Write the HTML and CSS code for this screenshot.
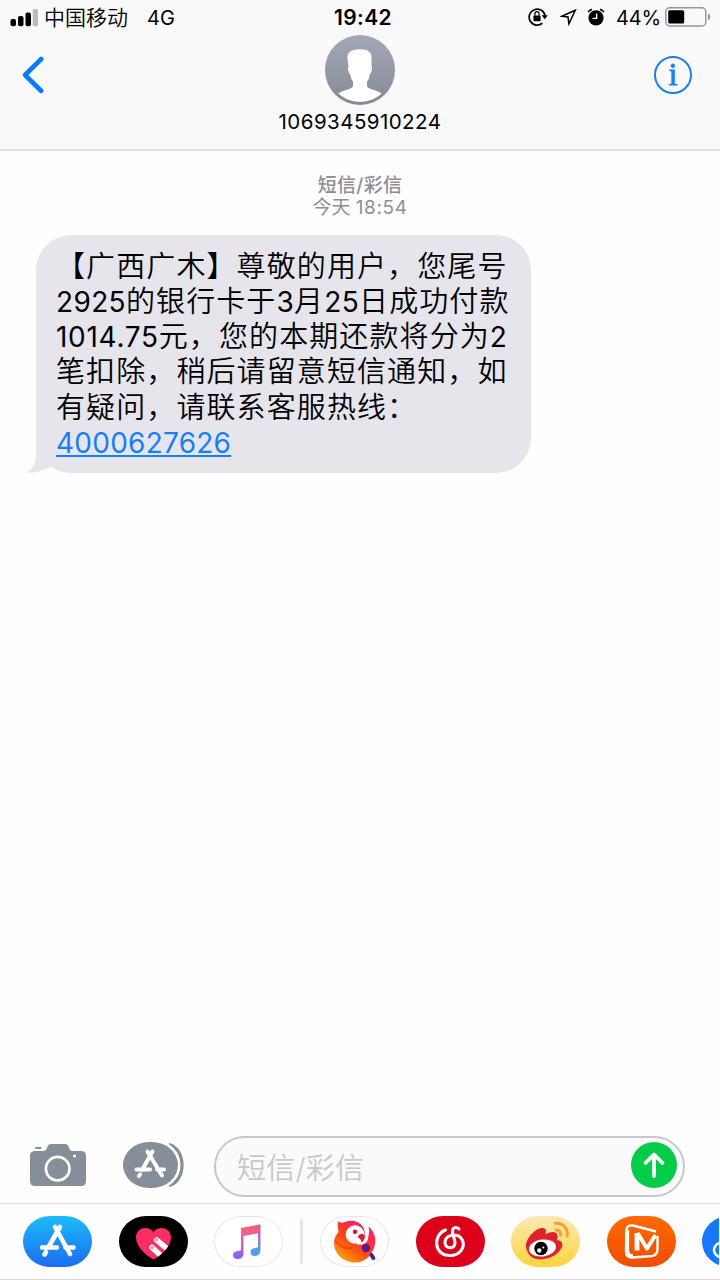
FILE: index.html
```
<!DOCTYPE html>
<html lang="zh-CN">
<head>
    <meta charset="utf-8">
    <title>短信</title>
    <link rel="stylesheet" href="styles.css">
</head>
<body>
    <div class="header">
        <div class="status-bar">
            <div class="status-left">
                <svg class="signal" width="28" height="18" viewBox="0 0 28 18">
                    <rect x="0.5" y="10" width="5.5" height="7.3" rx="2"/>
                    <rect x="8" y="7" width="5.5" height="10.3" rx="2"/>
                    <rect x="15.5" y="3.5" width="5.5" height="13.8" rx="2"/>
                    <rect x="22.8" y="0" width="5.2" height="17.3" rx="1.5" fill="#bcbcbc"/>
                </svg>
                <span class="carrier">中国移动</span>
                <span class="network">4G</span>
            </div>
            <div class="time">19:42</div>
            <div class="status-right">
                <svg width="20" height="20" viewBox="0 0 20 20">
                    <path d="M14.4 16.2A8 8 0 1 1 17 8.500" fill="none" stroke="#000" stroke-width="1.7"/>
                    <path d="M13.6 8.2h6.2l-3.1 4z"/>
                    <rect x="5.4" y="8.6" width="7.2" height="5.6" rx=".8"/>
                    <path d="M6.9 8.8V7a2.100 2.300 0 0 1 4.200 0v1.8" fill="none" stroke="#000" stroke-width="1.2"/>
                </svg>
                <svg class="location" width="17" height="17" viewBox="0 0 17 17">
                    <path d="M1.8 7.300L15.300 1.2L8.900 14.800L8 8z" fill="none" stroke="#000" stroke-width="1.5"/>
                </svg>
                <svg class="alarm" width="18" height="18" viewBox="0 0 18 18">
                    <circle cx="9" cy="9.8" r="7.6"/>
                    <path d="M1.2 4.2Q2.3 1.8 5 1.3M16.800 4.2Q15.700 1.8 13 1.3" fill="none" stroke="#000" stroke-width="1.8"/>
                    <path d="M9.6 5.4v5H5.6" fill="none" stroke="#fff" stroke-width="1.4"/>
                </svg>
                <span class="percent">44%</span>
                <svg class="battery" width="46" height="20" viewBox="0 0 46 20">
                    <rect x=".8" y=".8" width="40" height="18.2" rx="4" fill="none" stroke="#979797" stroke-width="1.5"/>
                    <rect x="3.2" y="3.2" width="16" height="13.4" rx="1.5"/>
                    <path d="M43 6.5q2.4 1 2.4 3.4t-2.4 3.4z" fill="#979797"/>
                </svg>
            </div>
        </div>
        <div class="nav">
            <svg class="back" width="24" height="40" viewBox="0 0 24 40">
                <path d="M20.300 4L4 20L20.300 36" fill="none" stroke="#0a7aff" stroke-width="4.6" stroke-linecap="round" stroke-linejoin="round"/>
            </svg>
            <div class="contact">
                <svg width="70" height="70" viewBox="0 0 70 70">
                    <defs>
                        <linearGradient id="avatar" x1="0" y1="0" x2="0" y2="1">
                            <stop offset="0" stop-color="#a3a8b6"/>
                            <stop offset="1" stop-color="#868a96"/>
                        </linearGradient>
                    </defs>
                    <circle cx="35" cy="35" r="35" fill="url(#avatar)"/>
                    <path d="M22.500 24C21.500 17 27 14.200 35 14.200S47.500 17 46.500 25V32Q47.500 32 46.800 35Q46.500 38.500 44.700 39.500Q44.500 44 42 46.500V51C43 55 52 54.500 56.500 58.500C51 64 43 66.800 35 66.800S19 64 13.500 58.500C18 54.500 27 55 28 51V46.500Q25.800 44 25.300 39.500Q23.500 38.500 23.200 35Q22.500 32 23.500 32z" fill="#fff"/>
                </svg>
                <div class="number">1069345910224</div>
            </div>
            <div class="info">i</div>
        </div>
    </div>

    <div class="messages">
        <div class="stamp">
            <div class="stamp-type">短信/彩信</div>
            <div>今天 <span class="stamp-time">18:54</span></div>
        </div>
        <div class="bubble">
            <svg class="tail" width="40" height="36" viewBox="0 0 40 36">
                <path d="M10 0V18Q10 31 0 35.500Q12 36.500 22 31L40 20V0z" fill="#e5e5eb"/>
            </svg>
            <div class="line">【广西广木】尊敬的用户，您尾号</div>
            <div class="line"><span class="num">2925</span>的银行卡于<span class="num">3</span>月<span class="num">25</span>日成功付款</div>
            <div class="line"><span class="num amount">1014.75</span>元，您的本期还款将分为<span class="num">2</span></div>
            <div class="line">笔扣除，稍后请留意短信通知，如</div>
            <div class="line">有疑问，请联系客服热线：</div>
            <div class="line"><a class="num" href="tel:4000627626">4000627626</a></div>
        </div>
    </div>

    <div class="compose">
        <svg class="camera" width="56" height="42" viewBox="0 0 56 42">
            <path d="M5 7H13Q16 7 17 4L17.800 2Q18.500 0 21 0H35Q37.500 0 38.300 2L39 4Q40 7 43 7H51Q56 7 56 12V37Q56 42 51 42H5Q0 42 0 37V12Q0 7 5 7z" fill="#868e99"/>
            <rect x="5" y="3" width="6.500" height="2" rx="1" fill="#868e99"/>
            <circle cx="27.700" cy="24.700" r="11.800" fill="none" stroke="#fff" stroke-width="2.600"/>
            <circle cx="44.500" cy="12" r="1.500" fill="#fff"/>
        </svg>
        <svg class="store" width="62" height="46" viewBox="0 0 62 46">
            <path d="M46 1C65.500 5 65.500 41 46 45" fill="#868e99"/>
            <rect x="-2" y="-1" width="59.500" height="48" rx="24" fill="#fff"/>
            <rect width="55" height="46" rx="26" ry="23" fill="#868e99"/>
            <g fill="none" stroke="#fff" stroke-width="4" stroke-linecap="round">
                <path d="M29.500 9.500L19 28M24.500 9.500L39 33.500M13.500 27.500H27M34 27.500H41M17 32.500L16 34"/>
            </g>
        </svg>
        <div class="field">
            <span>短信/彩信</span>
            <svg class="send" width="46" height="46" viewBox="0 0 46 46">
                <circle cx="23" cy="23" r="23" fill="#04cc49"/>
                <path d="M23 34V13M14.500 21L23 12.500L31.500 21" fill="none" stroke="#fff" stroke-width="3.800" stroke-linecap="round" stroke-linejoin="round"/>
            </svg>
        </div>
    </div>

    <div class="apps">
        <div class="app app-store">
            <svg width="69" height="51" viewBox="0 0 69 51" fill="none" stroke="#fff" stroke-width="4.600" stroke-linecap="round">
                <path d="M37 11L25.500 31M32 11L47 38M19 31.500H34M42.500 31.500H50.500M23 36L21.500 38.500"/>
            </svg>
        </div>
        <div class="app digital-touch">
            <svg width="69" height="51" viewBox="0 0 69 51">
                <defs>
                    <clipPath id="heart"><path d="M34.500 43.500C28 40 17 31 17 21.500C17 11.500 29.500 9 34.500 16C39.500 9 52 11.500 52 21.500C52 31 41 40 34.500 43.500z"/></clipPath>
                </defs>
                <g clip-path="url(#heart)">
                    <rect width="69" height="51" fill="#fc2e63"/>
                    <path d="M37.700 24L54 38M33 31.500L46 43.500" stroke="#fff" stroke-width="5.600" stroke-linecap="round"/>
                    <circle cx="37.500" cy="23.800" r="1.700" fill="#fc8fa9"/>
                    <circle cx="33" cy="31.500" r="1.700" fill="#fc8fa9"/>
                </g>
            </svg>
        </div>
        <div class="app light">
            <svg width="69" height="51" viewBox="0 0 69 51">
                <defs>
                    <linearGradient id="note" x1="0" y1="0" x2="0" y2="1">
                        <stop offset="0" stop-color="#fb5c74"/>
                        <stop offset=".35" stop-color="#e8649c"/>
                        <stop offset="1" stop-color="#7a63ff"/>
                    </linearGradient>
                    <linearGradient id="note2" x1="0" y1="0" x2="0" y2="1">
                        <stop offset="0" stop-color="#f95b74"/>
                        <stop offset=".4" stop-color="#b06bd0"/>
                        <stop offset="1" stop-color="#36aef5"/>
                    </linearGradient>
                </defs>
                <path d="M27 12L46 8.500V17L29.500 20V38Q29 43 23.500 43Q19 43 19 39.300Q19 35.500 24 35L27 34.300z" fill="url(#note)"/>
                <path d="M44 9L46.500 8.500V34Q46 40 40.500 40Q36.500 40 36.500 36.300Q36.500 32.500 41 32L44 31.300z" fill="url(#note2)"/>
            </svg>
        </div>
        <div class="divider"></div>
        <div class="app light">
            <svg width="69" height="51" viewBox="0 0 69 51">
                <defs>
                    <linearGradient id="parrot" x1="1" y1="0" x2=".3" y2="1">
                        <stop offset="0" stop-color="#e813c0"/>
                        <stop offset=".4" stop-color="#ff3038"/>
                        <stop offset=".65" stop-color="#ff4a14"/>
                        <stop offset="1" stop-color="#ffa008"/>
                    </linearGradient>
                </defs>
                <path d="M18 5.500Q21 7.500 25 6C31 3.500 38 5 42 9.500Q46 14 44 22L48.500 19Q50 15 48.500 10.500C54 15 56 21 55 28C53 39 45 46.500 35 46.500S14 39 14 27C14 22 16 19 18.500 16Q17 10 18 5.500z" fill="url(#parrot)"/>
                <path d="M15 24C19 31 26 33 33 32" fill="none" stroke="#e8140c" stroke-width="2" opacity=".35"/>
                <circle cx="35" cy="18.500" r="9.300" fill="#fff"/>
                <path d="M43 23Q47.500 19 47 13Q50.500 21 46 26.500Q42 30 36 28z" fill="#fff"/>
                <circle cx="35" cy="15.800" r="2.200" fill="#d9142a"/>
                <path d="M37.500 21Q41 15.500 45 19.500Q45 24 41.500 26.500Q41 22.500 37.500 21z" fill="#e51a35"/>
                <circle cx="46" cy="32" r="4.300" fill="#581a8c"/>
                <path d="M51.500 39L53.300 42" stroke="#581a8c" stroke-width="4" stroke-linecap="round"/>
            </svg>
        </div>
        <div class="app netease">
            <svg width="69" height="51" viewBox="0 0 69 51" fill="none" stroke="#fff" stroke-width="3.100" stroke-linecap="round">
                <path d="M29.500 14C17 18 17 39.500 34 39.500C44 39.500 50 31 46 23.500C42 16.500 29 18 29 26.500C29 33.500 39 33.500 39 27C39 23 36.500 19 36.500 15.500C36.500 11 40.500 10.500 43 13"/>
            </svg>
        </div>
        <div class="app weibo">
            <svg width="69" height="51" viewBox="0 0 69 51">
                <path d="M15 31C14 23 25 11 32 12Q36 12 34.500 18Q44 14 46 18Q47 20 46 24Q53 25 51 31C47 40 36 43.500 28 43.500C21 43 16 38 15 31z" fill="#e0202a"/>
                <ellipse cx="31.500" cy="32" rx="13.500" ry="8.500" fill="#fff" transform="rotate(-7 31.500 32)"/>
                <circle cx="30" cy="32.500" r="6.700"/>
                <circle cx="28.300" cy="34.500" r="2.200" fill="#fff"/>
                <circle cx="32.300" cy="31.500" r="1" fill="#fff"/>
                <path d="M43 7.500C52 6 58 13 56 21.500M44 14C48.500 13.500 50.500 17 49.500 20.500" fill="none" stroke="#fba02c" stroke-width="3"/>
            </svg>
        </div>
        <div class="app mango">
            <svg width="69" height="51" viewBox="0 0 69 51" fill="none" stroke="#fff" stroke-linejoin="round">
                <path d="M49 15.500L26 9.500Q19.500 8.500 19.300 15L19 35Q19 42 25.500 41.500L45 40Q50.500 39 50.500 33V20" stroke-width="2.400"/>
                <path d="M20.300 14V34Q20.500 40 26 40" stroke-width="3.600"/>
                <path d="M30 34.500V17" stroke-width="4.800"/>
                <path d="M30.500 17L40 32.500L48.500 19" stroke-width="4"/>
            </svg>
        </div>
        <!-- cut off by the right edge of the screen -->
        <div class="app-cut">
            <svg width="17" height="51" viewBox="0 0 17 51">
                <rect width="69" height="51" rx="27" ry="25.5" fill="#1878fa"/>
                <circle cx="19" cy="34" r="7" fill="none" stroke="#fff" stroke-width="2.5"/>
            </svg>
        </div>
    </div>
</body>
</html>
```
FILE: styles.css
```
* {
    box-sizing: border-box;
}

body {
    margin: 0;
    width: 720px;
    height: 1280px;
    display: flex;
    flex-direction: column;
    overflow: hidden;
    background-color: #fefefe;
    color: #000;
    font-family: Inter, "Noto Sans CJK SC", sans-serif;
}

svg {
    display: block;
    flex: none;
}

.header {
    height: 151px;
    background-color: #f9f9f9;
    border-bottom: 2px solid #dfdfe0;
}

.status-bar {
    height: 35px;
    display: grid;
    grid-template-columns: 1fr auto 1fr;
    align-items: center;
    line-height: 34px;
    padding-top: 1px;
    padding-left: 10px;
    padding-right: 9px;
    font-size: 20px;
}

.status-left, .status-right {
    display: flex;
    align-items: center;
}

.status-left {
    margin-top: -1px;
}

.status-right {
    justify-content: flex-end;
    margin-top: -2px;
}

.carrier {
    margin-left: 6px;
    padding-top: 1px;
    font-size: 21px;
    font-weight: 350;
}

.network {
    margin-left: 19px;
    padding-top: 1px;
}

.time {
    padding-left: 5px;
    font-weight: 600;
    font-size: 21px;
    letter-spacing: 0.4px;
}

.location {
    margin-left: 12px;
}

.alarm {
    margin-left: 10px;
}

.percent {
    margin-left: 11px;
    padding-top: 1px;
    font-size: 20px;
    letter-spacing: -0.2px;
}

.battery {
    margin-left: 4px;
}

.nav {
    height: 114px;
    display: grid;
    grid-template-columns: 1fr auto 1fr;
    padding: 0 28px 0 20px;
}

.back {
    margin-top: 20px;
    margin-left: 1px;
}

.contact {
    display: flex;
    flex-direction: column;
    align-items: center;
    margin-left: 8px;
}

.number {
    margin-top: 5px;
    font-size: 20.5px;
    line-height: 24px;
    letter-spacing: 0.45px;
}

.info {
    justify-self: end;
    margin-top: 21px;
    width: 38px;
    height: 38px;
    border: 2px solid #1b7ff2;
    border-radius: 50%;
    color: #1b7ff2;
    font-family: "Liberation Serif", serif;
    font-size: 32px;
    line-height: 33px;
    text-align: center;
    -webkit-text-stroke: 0.8px #1b7ff2;
}

.messages {
    flex: 1;
    padding-top: 24px;
}

.stamp {
    color: #8e8e93;
    font-size: 19px;
    line-height: 22px;
    text-align: center;
}

.stamp-type {
    font-weight: 500;
    letter-spacing: 0.3px;
}

.stamp-time {
    letter-spacing: 0.6px;
}

.bubble {
    position: relative;
    width: 495px;
    height: 238px;
    margin-top: 16px;
    margin-left: 36px;
    padding: 13.5px 20px;
    border-radius: 35px;
    background-color: #e5e5eb;
}

.tail {
    position: absolute;
    left: -10px;
    bottom: 0;
}

.line {
    position: relative;
    height: 35.3px;
    line-height: 35.3px;
    font-size: 29px;
    font-weight: 350;
    letter-spacing: 1.1px;
    white-space: nowrap;
}

.num {
    font-size: 28px;
    font-weight: 400;
    letter-spacing: 0.35px;
}

.amount {
    letter-spacing: 0.7px;
}

a.num {
    color: #167efb;
    letter-spacing: 0.25px;
    text-decoration-thickness: 2px;
    text-underline-offset: 2px;
}

.compose {
    height: 73px;
    display: flex;
    align-items: center;
    padding-left: 30px;
    padding-right: 35px;
}

.camera, .store {
    margin-bottom: 3px;
}

.store {
    margin-left: 37px;
}

.field {
    flex: 1;
    height: 61px;
    margin-left: 29px;
    padding-left: 21px;
    padding-right: 6px;
    padding-bottom: 2px;
    display: flex;
    align-items: center;
    justify-content: space-between;
    border: 2px solid #c7c7cc;
    border-radius: 31px;
    background-color: #fafafa;
    color: #c7c7cc;
    font-size: 29px;
    font-weight: 350;
    letter-spacing: 0.2px;
}

.send {
    margin-bottom: 1px;
}

.apps {
    height: 77px;
    display: flex;
    align-items: center;
    gap: 26.5px;
    padding-left: 23px;
    border-top: 1px solid #dedede;
    border-bottom: 1px solid #d6d6d6;
}

.app {
    flex: none;
    width: 69px;
    height: 51px;
    border-radius: 27px / 25.5px;
    overflow: hidden;
}

.app-cut {
    flex: 1;
    overflow: hidden;
}

.app-store {
    background: linear-gradient(#1cbcfa, #1d6bf2);
}

.digital-touch {
    background-color: #000;
}

.light {
    background-color: #fff;
    box-shadow: inset 0 0 0 1px #e6e6e6;
}

.divider {
    flex: none;
    width: 3px;
    height: 45px;
    margin-left: -10px;
    margin-right: -9px;
    background-color: #e5e5ee;
    border-radius: 1px;
}

.netease {
    background-color: #dc001b;
}

.weibo {
    background: linear-gradient(#fbe9b4, #ffd43c);
}

.mango {
    background: linear-gradient(#ff6a00, #f04c00);
}
```
